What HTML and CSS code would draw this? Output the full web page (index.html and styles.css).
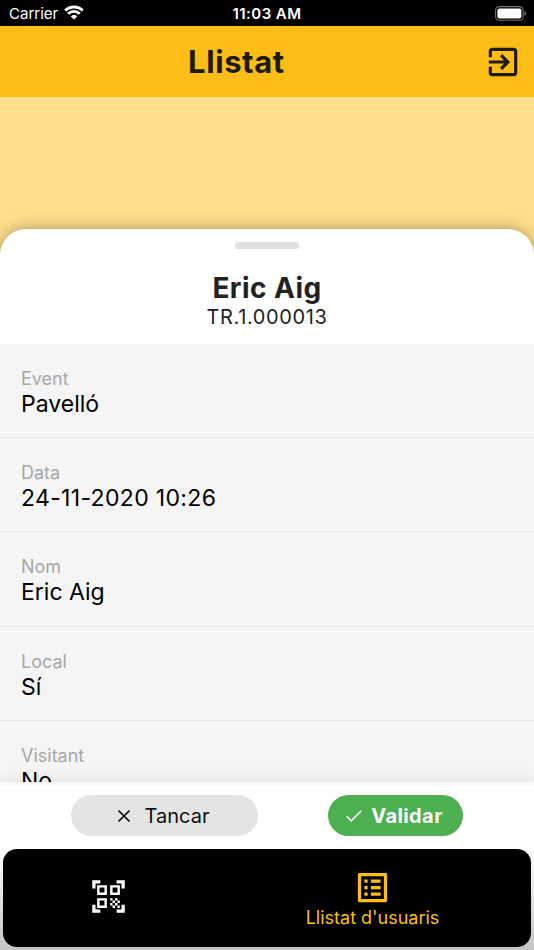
FILE: index.html
```html
<!DOCTYPE html>
<html lang="ca">
<head>
<meta charset="utf-8">
<title>Llistat</title>
<link rel="stylesheet" href="styles.css">
</head>
<body>
<div id="app">
	<div class="status">
		<div class="carrier">
			<span>Carrier</span>
			<svg class="wifi" viewBox="0 0 20 15" width="20" height="15">
				<path d="M1.2 5.6a12.5 12.5 0 0 1 17.6 0M4.2 8.7a8.2 8.2 0 0 1 11.6 0" fill="none" stroke="#fff" stroke-width="2.8"/>
				<path d="M10 14.6l-3.2-3.2a4.6 4.6 0 0 1 6.4 0z" fill="#fff"/>
			</svg>
		</div>
		<span class="time">11:03 AM</span>
		<div class="battery">
			<svg viewBox="0 0 32 15" width="32" height="15">
				<rect x=".6" y=".6" width="27.6" height="13.6" rx="3.8" fill="none" stroke="#777" stroke-width="1.1"/>
				<rect x="2.4" y="2.4" width="24" height="10" rx="2.2" fill="#fff"/>
				<path d="M29.6 5v4.8c1-.4 1.5-1.3 1.5-2.4s-.5-2-1.5-2.4z" fill="#777"/>
			</svg>
		</div>
	</div>
	<div class="header">
		<h1>Llistat</h1>
		<svg class="exit" viewBox="0 0 24 24" width="38" height="38"><path d="M10.09 15.59L11.5 17l5-5-5-5-1.41 1.41L12.67 11H3v2h9.67l-2.58 2.59zM19 3H5c-1.11 0-2 .9-2 2v4h2V5h14v14H5v-4H3v4c0 1.1.89 2 2 2h14c1.1 0 2-.9 2-2V5c0-1.1-.9-2-2-2z"/></svg>
	</div>
	<div class="backdrop"></div>
	<div class="sheet">
		<div class="handle"></div>
		<h2>Eric Aig</h2>
		<p class="code">TR.1.000013</p>
		<ul class="list">
			<li><label>Event</label><span>Pavelló</span></li>
			<li><label>Data</label><span class="date">24-11-2020 10:26</span></li>
			<li><label>Nom</label><span>Eric Aig</span></li>
			<li><label>Local</label><span>Sí</span></li>
			<li><label>Visitant</label><span>No</span></li>
		</ul>
	</div>
	<div class="actions">
		<button class="close">
			<svg viewBox="0 0 12 12" width="12" height="12"><path d="M.5.5l11 11M11.5.5l-11 11"/></svg>
			<span>Tancar</span>
		</button>
		<button class="validate">
			<svg viewBox="0 0 16 12" width="16" height="12"><path d="M.7 6.3l4.6 4.6L15.3.8"/></svg>
			<span>Validar</span>
		</button>
	</div>
	<div class="bottom">
		<div class="tabs">
			<div class="tab">
				<svg viewBox="0 0 24 24" width="39" height="39"><path d="M9.5 6.5v3h-3v-3h3M11 5H5v6h6V5zM9.5 14.5v3h-3v-3h3M11 13H5v6h6v-6zM17.5 6.5v3h-3v-3h3M19 5h-6v6h6V5zM13 13h1.5v1.5H13V13zM14.5 14.5H16V16h-1.5v-1.5zM16 13h1.5v1.5H16V13zM13 16h1.5v1.5H13V16zM14.5 17.5H16V19h-1.5v-1.5zM16 16h1.5v1.5H16V16zM17.5 14.5H19V16h-1.5v-1.5zM17.5 17.5H19V19h-1.5v-1.5zM22 7h-2V4h-3V2h5v5zM22 22v-5h-2v3h-3v2h5zM2 22h5v-2H4v-3H2v5zM2 2v5h2V4h3V2H2z"/></svg>
			</div>
			<div class="tab active">
				<svg viewBox="0 0 24 24" width="39" height="39"><path d="M11 7h6v2h-6zm0 4h6v2h-6zm0 4h6v2h-6zM7 7h2v2H7zm0 4h2v2H7zm0 4h2v2H7zM20.1 3H3.9c-.5 0-.9.4-.9.9v16.2c0 .4.4.9.9.9h16.2c.4 0 .9-.5.9-.9V3.9c0-.5-.5-.9-.9-.9zM19 19H5V5h14v14z"/></svg>
				<span>Llistat d'usuaris</span>
			</div>
		</div>
	</div>
</div>
</body>
</html>
```
FILE: styles.css
```css
*{ margin:0; padding:0; box-sizing:border-box;}
body{ font-family:Inter,"Liberation Sans",sans-serif; color:#000;}
li{ list-style:none;}
svg{ display:block; flex:none;}
#app{ width:534px; height:950px; display:flex; flex-direction:column; overflow:hidden; background:#ffde8c;}

.status{ height:26px; flex:none; background:#000; color:#fff; display:grid; grid-template-columns:1fr auto 1fr; align-items:center; padding:1px 7px 0 9px; font-size:15px; line-height:24px;}
.carrier{ display:flex; align-items:center; gap:6px;}
.wifi{ margin-top:-2px;}
.time{ font-weight:600; letter-spacing:.45px; margin-left:-2px;}
.battery{ display:flex; justify-content:flex-end;}

.header{ height:71px; flex:none; background:#fcbd17; display:flex; align-items:center; padding:0 12px 0 0;}
.header h1{ flex:1; padding-left:188px; font-size:31px; font-weight:700; letter-spacing:.6px; color:#201a08; line-height:71px;}
.exit{ fill:#201a08;}
.backdrop{ height:132px; flex:none;}

.sheet{ height:553px; flex:none; overflow:hidden; background:#fff; border-radius:26px 26px 0 0; box-shadow:0 0 15px rgba(0,0,0,.35); text-align:center;}
.handle{ width:64px; height:7px; margin:13px auto 0; border-radius:4px; background:#e0e0e0;}
.sheet h2{ margin-top:21px; font-size:28px; line-height:36px; letter-spacing:.45px; color:#222;}
.code{ margin-top:-1px; font-size:20px; line-height:24px; letter-spacing:.6px; color:#222;}
.list{ margin-top:15px; background:#f5f5f5; text-align:left;}
.list li{ height:94.2px; padding:23px 21px 0; border-bottom:1px solid #e6e6e6;}
.list label{ display:block; font-size:18px; line-height:24px; color:#a6a6a6;}
.list span{ display:block; font-size:23px; line-height:27px;}
.list .date{ letter-spacing:.33px;}

.actions{ height:67px; flex:none; position:relative; background:#fff; box-shadow:0 -2px 16px rgba(0,0,0,.07); border-top:3px solid #f9f9f9; padding:10px 71px 0; display:flex; justify-content:space-between; align-items:flex-start;}
.actions button{ height:41px; border:0; border-radius:21px; display:flex; align-items:center; justify-content:center; font-family:inherit; font-size:20px;}
.actions path{ fill:none; stroke:currentColor; stroke-width:1.6;}
.close{ width:187px; gap:15px; padding-right:2px; background:#e4e4e4; color:#111;}
.actions .validate{ width:135px; gap:9px; padding-right:2px; background:#4caf50; color:#fff; font-weight:700; letter-spacing:.4px;}

.bottom{ height:101px; flex:none; position:relative; padding:0 3px 3px; background:linear-gradient(#fff,#c4c4c4);}
.tabs{ height:98px; border-radius:14px; background:#000; display:flex;}
.tab{ flex:1; display:flex; flex-direction:column; align-items:center; justify-content:center; padding:0 53px 4px 0; fill:#fff;}
.tab.active{ justify-content:flex-start; padding-top:19px; fill:#fcbd17; color:#fcbd17; font-size:18px; line-height:22px;}
```
